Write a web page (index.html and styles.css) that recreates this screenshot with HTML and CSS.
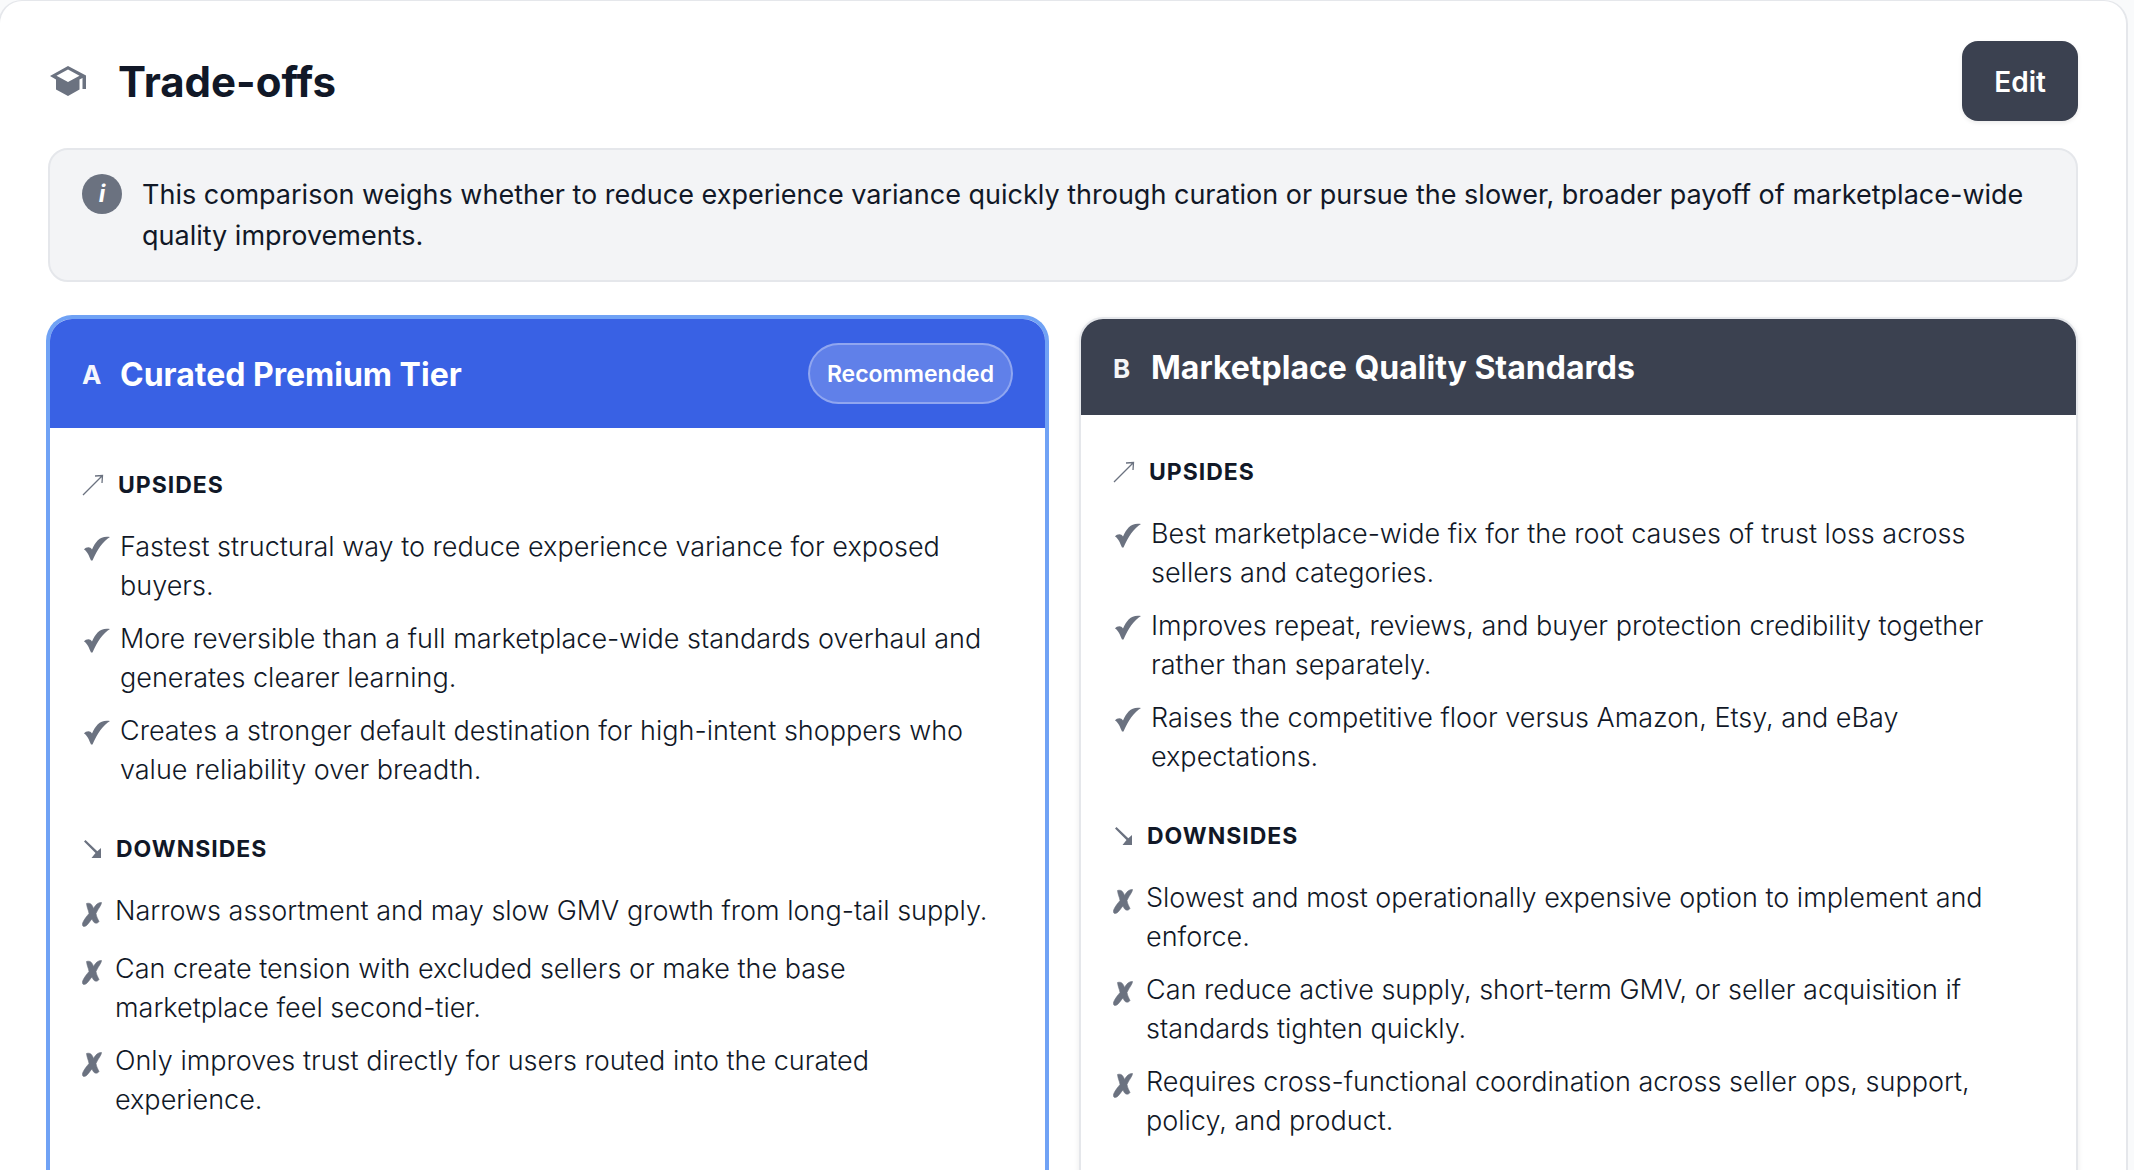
FILE: index.html
```html
<!DOCTYPE html>
<html lang="en">
<head>
    <meta charset="UTF-8">
    <meta name="viewport" content="width=device-width, initial-scale=1.0">
    <title>Trade-offs</title>
    <link rel="stylesheet" href="styles.css">
</head>
<body>
    <!-- Shared icons -->
    <svg class="sprite" aria-hidden="true">
        <symbol id="icon-cap" viewBox="0 0 36 30">
            <path fill-rule="evenodd" d="M18 0L36 9.500V23h-3.500V12L29.500 13.500V23.500L18 30L6 23.500V13.500L0 10ZM18 3.500L6.500 9.700L18 16L29.500 9.700Z"/>
        </symbol>
        <symbol id="icon-up" viewBox="0 0 22 22">
            <path d="M1 21L20 2M13 2L20.500 1.500L20 9" fill="none" stroke="currentColor" stroke-width="1.300"/>
        </symbol>
        <symbol id="icon-down" viewBox="0 0 18 18">
            <path d="M0 1.500L1.500 0L13.300 11.200L17 8V18H7.500L11.500 13Z"/>
        </symbol>
        <symbol id="icon-check" viewBox="0 0 26 25">
            <path d="M0 13.500C2 11 6 10 8 13.500C12 5 16 -.500 26 1C19 5 13 14 8.500 24.500H7C5 20 3.500 15.500 0 13.500Z"/>
        </symbol>
        <symbol id="icon-cross" viewBox="0 0 20 25">
            <path d="M4.500 1.500C8 .500 10 2 11.500 6.500C14 2 16.500 .500 19.500 .500C19.500 3 16.500 6 14 11.500C14.500 15 16 17 17 19.500C15 22.500 11.500 21.500 10 17C7 20 5 25 1.500 24.500C-1.500 23 2 17.500 7 11.500C6.500 8 5 6 4.500 1.500Z" stroke="currentColor" stroke-width="0.600"/>
        </symbol>
    </svg>

    <main class="panel">
        <header class="panel-header">
            <svg class="cap-icon"><use href="#icon-cap"/></svg>
            <h1>Trade-offs</h1>
            <button type="button" class="edit-button">Edit</button>
        </header>

        <div class="summary">
            <span class="info-icon">i</span>
            <p>This comparison weighs whether to reduce experience variance quickly through curation or pursue the slower, broader payoff of marketplace-wide quality improvements.</p>
        </div>

        <div class="options">
            <section class="card recommended">
                <div class="card-header">
                    <span class="letter">A</span>
                    <h2>Curated Premium Tier</h2>
                    <span class="badge">Recommended</span>
                </div>
                <div class="card-body">
                    <div class="group">
                        <h3><svg class="up-icon"><use href="#icon-up"/></svg>Upsides</h3>
                        <ul>
                            <li><svg class="check-icon"><use href="#icon-check"/></svg><span>Fastest structural way to reduce experience variance for exposed buyers.</span></li>
                            <li><svg class="check-icon"><use href="#icon-check"/></svg><span>More reversible than a full marketplace-wide standards overhaul and generates clearer learning.</span></li>
                            <li><svg class="check-icon"><use href="#icon-check"/></svg><span>Creates a stronger default destination for high-intent shoppers who value reliability over breadth.</span></li>
                        </ul>
                    </div>
                    <div class="group">
                        <h3><svg class="down-icon"><use href="#icon-down"/></svg>Downsides</h3>
                        <ul>
                            <li><svg class="cross-icon"><use href="#icon-cross"/></svg><span>Narrows assortment and may slow GMV growth from long-tail supply.</span></li>
                            <li><svg class="cross-icon"><use href="#icon-cross"/></svg><span>Can create tension with excluded sellers or make the base marketplace feel second-tier.</span></li>
                            <li><svg class="cross-icon"><use href="#icon-cross"/></svg><span>Only improves trust directly for users routed into the curated experience.</span></li>
                        </ul>
                    </div>
                </div>
            </section>

            <section class="card">
                <div class="card-header">
                    <span class="letter">B</span>
                    <h2>Marketplace Quality Standards</h2>
                </div>
                <div class="card-body">
                    <div class="group">
                        <h3><svg class="up-icon"><use href="#icon-up"/></svg>Upsides</h3>
                        <ul>
                            <li><svg class="check-icon"><use href="#icon-check"/></svg><span>Best marketplace-wide fix for the root causes of trust loss across sellers and categories.</span></li>
                            <li><svg class="check-icon"><use href="#icon-check"/></svg><span>Improves repeat, reviews, and buyer protection credibility together rather than separately.</span></li>
                            <li><svg class="check-icon"><use href="#icon-check"/></svg><span>Raises the competitive floor versus Amazon, Etsy, and eBay expectations.</span></li>
                        </ul>
                    </div>
                    <div class="group">
                        <h3><svg class="down-icon"><use href="#icon-down"/></svg>Downsides</h3>
                        <ul>
                            <li><svg class="cross-icon"><use href="#icon-cross"/></svg><span>Slowest and most operationally expensive option to implement and enforce.</span></li>
                            <li><svg class="cross-icon"><use href="#icon-cross"/></svg><span>Can reduce active supply, short-term GMV, or seller acquisition if standards tighten quickly.</span></li>
                            <li><svg class="cross-icon"><use href="#icon-cross"/></svg><span>Requires cross-functional coordination across seller ops, support, policy, and product.</span></li>
                        </ul>
                    </div>
                </div>
            </section>
        </div>
    </main>
</body>
</html>
```
FILE: styles.css
```css
* {
    box-sizing: border-box;
}
html {
    overflow: hidden;
}
body {
    margin: 0;
    background-color: #f9fafb;
    color: #111827;
    font-family: Inter, "Liberation Sans", sans-serif;
    font-size: 27px;
}
h1, h2, h3, p, ul {
    margin: 0;
    padding: 0;
}
svg {
    flex-shrink: 0;
    fill: currentColor;
}
.sprite {
    display: none;
}
.panel {
    min-height: 100vh;
    margin: 0 6px 0 -2px;
    padding: 39px 48px 80px;
    background-color: #fff;
    border: 2px solid #e5e7eb;
    border-top-width: 1px;
    border-bottom: 0;
    border-radius: 24px 24px 0 0;
}
.panel-header {
    display: flex;
    align-items: center;
    margin-bottom: 27px;
    padding-top: 1px;
}
.cap-icon {
    width: 36px;
    height: 30px;
    margin: 0 32px 0 2px;
    color: #6b7280;
}
h1 {
    padding-top: 2px;
    font-size: 42px;
    font-weight: 700;
    line-height: 52px;
}
.edit-button {
    height: 80px;
    margin-left: auto;
    padding: 2px 32px 0;
    color: #fff;
    background-color: #3b4150;
    border: none;
    border-radius: 16px;
    box-shadow: 0 2px 4px rgba(0, 0, 0, 0.08);
    font-family: inherit;
    font-size: 28px;
    font-weight: 600;
    cursor: pointer;
}
.summary {
    display: flex;
    gap: 20px;
    padding: 24px 32px;
    background-color: #f3f4f6;
    border: 2px solid #e5e7eb;
    border-radius: 20px;
    line-height: 41px;
}
.info-icon {
    flex-shrink: 0;
    width: 40px;
    height: 40px;
    border-radius: 50%;
    background-color: #6b7280;
    color: #fff;
    font-size: 24px;
    font-style: italic;
    font-weight: 700;
    line-height: 40px;
    text-align: center;
}
.options {
    display: grid;
    grid-template-columns: 1fr 1fr;
    gap: 32px;
    margin-top: 35px;
}
.card {
    overflow: hidden;
    min-height: 900px;
    background-color: #fff;
    border: 2px solid #e5e7eb;
    border-radius: 24px;
    box-shadow: 0 2px 6px rgba(0, 0, 0, 0.08);
}
.recommended {
    border-color: #70a2f5;
    box-shadow: 0 0 0 2px #70a2f5;
}
.card-header {
    display: flex;
    align-items: center;
    padding: 24px 32px;
    background-color: #3b4150;
    color: #fff;
}
.recommended .card-header {
    background-color: #3961e4;
}
.letter {
    width: 38px;
    padding-top: 2px;
    font-size: 26px;
    font-weight: 700;
    opacity: 0.95;
}
h2 {
    padding-top: 2px;
    font-size: 32px;
    font-weight: 700;
    line-height: 46px;
}
.badge {
    margin-left: auto;
    padding: 1px 17px 0;
    background-color: rgba(255, 255, 255, 0.2);
    border: 2px solid rgba(255, 255, 255, 0.3);
    border-radius: 31px;
    font-size: 23px;
    font-weight: 600;
    line-height: 56px;
}
.card-body {
    display: grid;
    gap: 44px;
    padding: 41px 32px;
}
h3 {
    display: flex;
    align-items: center;
    gap: 12px;
    margin-bottom: 26px;
    font-size: 23px;
    font-weight: 700;
    line-height: 32px;
    letter-spacing: 1px;
    text-transform: uppercase;
}
h3 svg, li svg {
    color: #6b7280;
}
.up-icon {
    width: 22px;
    height: 22px;
    margin-right: 2px;
}
.down-icon {
    width: 18px;
    height: 18px;
    margin: 0 2px;
}
ul {
    display: grid;
    gap: 14px;
    list-style: none;
}
li {
    display: flex;
    gap: 10px;
    padding-right: 12px;
    font-weight: 300;
    line-height: 39px;
}
.check-icon {
    width: 26px;
    height: 25px;
    margin: 9px 0 0 2px;
}
.cross-icon {
    width: 20px;
    height: 25px;
    margin: 11px 3px 8px 0;
}
```
